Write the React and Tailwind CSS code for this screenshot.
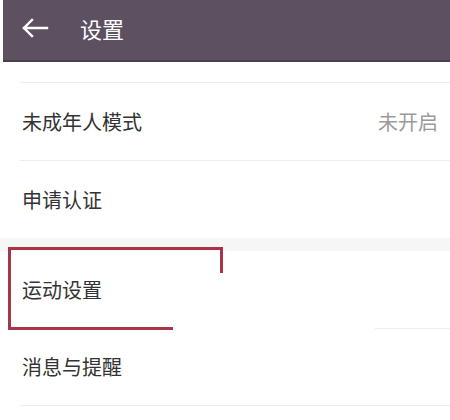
import React from 'react';

const font = { fontFamily: '"Noto Sans CJK SC", "Noto Sans", sans-serif' };

function Row({ label, value, h = 'h-[77px]' }) {
  return (
    <div className={`${h} flex items-center justify-between pl-[22px] pr-[12px]`}>
      <span className="text-[20px] leading-none text-[#333333]">{label}</span>
      {value && <span className="text-[20px] leading-none text-[#9a9a9a]">{value}</span>}
    </div>
  );
}

export default function App() {
  return (
    <div className="w-[450px] h-[420px] bg-white overflow-hidden" style={font}>
      {/* Header */}
      <div className="ml-[3px] h-[62px] pb-[5px] bg-[#5c5061] border-b-2 border-[#4a3f4e] flex items-center">
        <svg width="28" height="20" viewBox="0 0 28 20" className="ml-[18px]">
          <path d="M26 10H3M11 2L3 10l8 8" fill="none" stroke="#fff" strokeWidth="2.4" strokeLinecap="square" />
        </svg>
        <span className="ml-[31px] text-[22px] leading-none text-white">设置</span>
      </div>

      <div className="h-[20px]" />
      <div className="ml-[20px] h-[1px] bg-[#ececec]" />

      <Row label="未成年人模式" value="未开启" />
      <div className="ml-[20px] h-[1px] bg-[#ececec]" />
      <Row label="申请认证" />

      <div className="h-[13px] bg-[#f6f6f6]" />

      <div className="relative">
        <Row label="运动设置" />
        <div className="ml-[375px] h-[1px] bg-[#ececec]" />
        {/* red annotation box */}
        <div className="absolute left-[8px] top-[-4px] w-[215px] h-[3px] bg-[#a83447]" />
        <div className="absolute left-[220px] top-[-4px] w-[3px] h-[26px] bg-[#a83447]" />
        <div className="absolute left-[8px] top-[-4px] w-[3px] h-[83px] bg-[#a83447]" />
        <div className="absolute left-[8px] top-[76px] w-[165px] h-[3px] bg-[#a83447]" />
      </div>

      <Row label="消息与提醒" h="h-[76px]" />
      <div className="ml-[20px] h-[1px] bg-[#ececec]" />
    </div>
  );
}
